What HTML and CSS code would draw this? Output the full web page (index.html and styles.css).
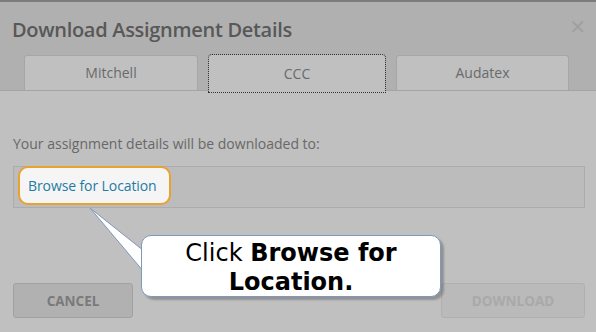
FILE: index.html
```html
<!DOCTYPE html>
<html>
<head>
<meta charset="utf-8">
<link rel="stylesheet" href="styles.css">
</head>
<body>
<div class="modal">
  <div class="header">
    <div class="title-row">
      <h1 class="title">Download Assignment Details</h1>
      <span class="close">&#x2715;</span>
    </div>
    <div class="tabs">
      <div class="tab">Mitchell</div>
      <div class="tab active">CCC</div>
      <div class="tab last">Audatex</div>
    </div>
  </div>
  <div class="body">
    <p class="info">Your assignment details will be downloaded to:</p>
    <div class="location">
      <div class="browse">Browse for Location</div>
    </div>
    <div class="footer">
      <button class="btn cancel">CANCEL</button>
      <button class="btn download">DOWNLOAD</button>
    </div>
  </div>
  <svg class="tail" width="70" height="80" viewBox="0 0 70 80">
    <polygon points="2,2 56,45 56,66" fill="#fff"/>
    <polyline points="56,45 2,2 56,66" fill="none" stroke="#7f98bd" stroke-width="1"/>
  </svg>
  <div class="callout">
    <div class="line">Click <b>Browse for</b></div>
    <div class="line"><b>Location.</b></div>
  </div>
</div>
</body>
</html>
```
FILE: styles.css
```css
* { box-sizing: border-box; }
html, body { margin: 0; padding: 0; }
body {
  width: 596px;
  height: 332px;
  background: #c0c0c0;
  font-family: "Open Sans", sans-serif;
  overflow: hidden;
}
.modal {
  position: relative;
  height: 332px;
  border-top: 2px solid #7c7c7c;
}
.header {
  background: #b0b0b0;
  padding: 12px 10px 0 12px;
  border-bottom: 1px solid #a4a4a4;
}
.title-row {
  display: flex;
  justify-content: space-between;
  align-items: center;
  height: 30px;
}
.title {
  margin: 0;
  font-size: 20px;
  font-weight: 600;
  color: #585858;
  letter-spacing: -0.3px;
}
.close {
  color: #a0a0a0;
  font-size: 20px;
  font-weight: 700;
  font-family: "DejaVu Sans", sans-serif;
  margin-top: -4px;
}
.tabs {
  display: flex;
  gap: 11px;
  padding-left: 12px;
  margin-top: 11px;
}
.tab {
  width: 174px;
  height: 35px;
  background: #c0c0c0;
  border: 1px solid #a6a6a6;
  border-bottom: none;
  border-radius: 3px 3px 0 0;
  display: flex;
  align-items: center;
  justify-content: center;
  font-size: 14px;
  color: #6a6a6a;
  padding-bottom: 2px;
}
.tab.last { width: 173px; }
.tab.active {
  width: 176px;
  outline: 1px dotted #333;
  outline-offset: 0;
  border-color: #c0c0c0;
  height: 37px;
  margin-bottom: -2px;
  position: relative;
}
.body {
  padding: 0 11px 0 13px;
}
.info {
  margin: 43px 0 0 0;
  font-size: 14px;
  color: #686868;
  line-height: 19px;
}
.location {
  margin-top: 13px;
  height: 42px;
  background: #bcbcbc;
  border: 1px solid #acacac;
  padding: 0 0 0 4px;
  display: flex;
  align-items: flex-start;
}
.browse {
  margin-top: -1px;
  height: 39px;
  width: 153px;
  background: #f5f5f5;
  border: 2px solid #e8a232;
  border-radius: 10px;
  display: flex;
  align-items: center;
  padding-left: 8px;
  font-size: 14px;
  color: #1f7ba2;
  letter-spacing: -0.1px;
}
.footer {
  display: flex;
  justify-content: space-between;
  margin-top: 75px;
}
.btn {
  height: 35px;
  border-radius: 3px;
  font-family: "Open Sans", sans-serif;
  font-size: 13.5px;
  font-weight: 700;
  padding: 0;
}
.cancel {
  width: 120px;
  background: #b1b1b1;
  border: 1px solid #a2a2a2;
  color: #7a7a7a;
}
.download {
  width: 144px;
  background: #bababa;
  border: 1px solid #b0b0b0;
  color: #a9a9a9;
}
.tail {
  position: absolute;
  left: 88px;
  top: 204px;
}
.callout {
  position: absolute;
  left: 141px;
  top: 233px;
  width: 300px;
  height: 62px;
  background: #fff;
  border: 1px solid #7f98bd;
  border-radius: 10px;
  box-shadow: 3px 3px 2px rgba(90, 90, 90, 0.45);
  font-family: "DejaVu Sans", Verdana, sans-serif;
  font-size: 24px;
  line-height: 29px;
  text-align: center;
  color: #000;
  padding: 3px 10px 0 10px;
}
.line { white-space: nowrap; }
.callout b { font-weight: 700; }
```
